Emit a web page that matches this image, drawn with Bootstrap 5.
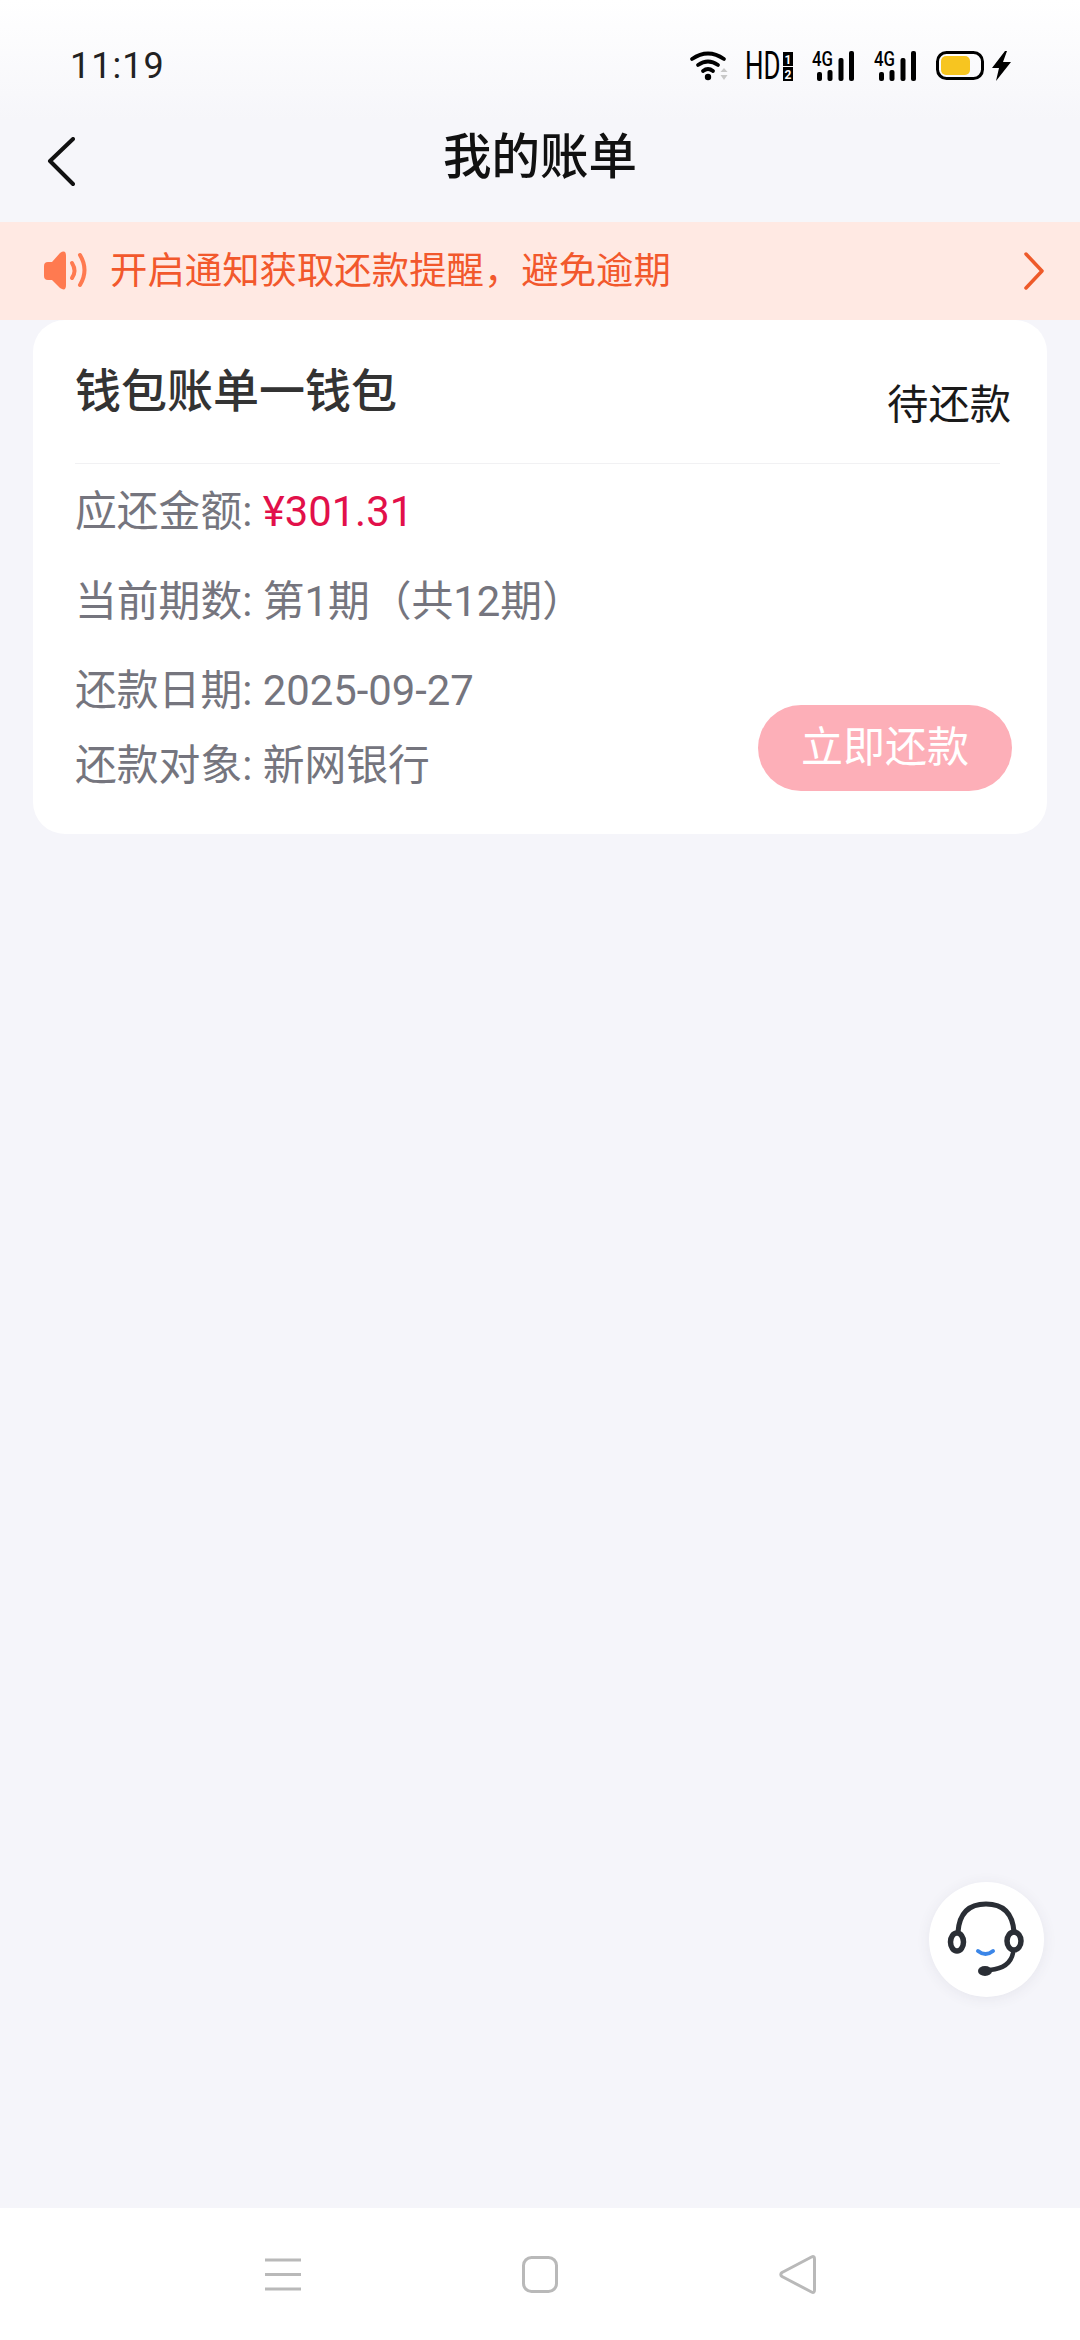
<!DOCTYPE html>
<html lang="zh-CN">
<head>
  <meta charset="UTF-8">
  <meta name="viewport" content="width=device-width, initial-scale=1.0">
  <title>我的账单</title>
  <link href="https://cdn.jsdelivr.net/npm/bootstrap@5.3.0/dist/css/bootstrap.min.css" rel="stylesheet">
  <style>
    html, body { margin: 0; }
    body {
      width: 1080px;
      height: 2340px;
      overflow: hidden;
      background: #f5f5fa;
      font-family: Roboto, "Noto Sans CJK SC", sans-serif;
    }
    .page-wrap { height: 2340px; }
    .top-area {
      height: 222px;
      background: linear-gradient(#fff 0, #f6f6fa 120px);
    }
    .status-bar { height: 102px; padding: 30px 69px 0 70px; }
    .status-time { font-size: 36px; color: #222; letter-spacing: 1px; line-height: 1; }
    .status-icons { gap: 18px; }
    .status-icons svg { overflow: visible; }
    .title-bar { height: 120px; }
    .back-link { left: 47px; top: 35px; }
    .page-title { font-size: 48.5px; font-weight: 500; color: #111; line-height: 1; padding-bottom: 7px; }
    .notice-bar {
      height: 98px;
      padding: 0 36px 0 44px;
      background: #ffe9e3;
      color: #f2582c;
      font-size: 37.4px;
    }
    .notice-text { margin-left: 21px; }
    .bill-card {
      margin: 0 33px;
      height: 514px;
      background: #fff;
      border-radius: 32px;
    }
    .bill-head { height: 143px; padding: 0 36px 0 42px; }
    .bill-name { font-size: 46px; font-weight: 500; color: #333; line-height: 60px; padding-top: 41px; }
    .bill-state { font-size: 41.3px; color: #1a1a1a; line-height: 60px; padding-top: 55px; }
    .bill-line { height: 1px; margin: 0 47px 0 42px; background: #f1f1f3; }
    .bill-body { padding: 18px 35px 0 42px; }
    .info-row { font-size: 41.8px; line-height: 60px; color: #75757e; }
    .gap-a { margin-top: 30px; }
    .gap-b { margin-top: 29px; }
    .gap-c { margin-top: 15px; }
    .amount-text { color: #e2104a; }
    .pay-btn {
      width: 254px;
      height: 86px;
      padding: 0;
      border: 0;
      border-radius: 43px;
      background: #fdafb8;
      color: #fff;
      font-size: 42px;
      line-height: 86px;
      margin-bottom: 5px;
    }
    .service-btn {
      left: 929px;
      top: 1882px;
      width: 115px;
      height: 115px;
      background: #fff;
      box-shadow: 0 2px 14px rgba(60, 60, 90, .08);
    }
    .bottom-nav { height: 132px; background: #fff; gap: 221px; }
  </style>
</head>
<body>
  <div class="page-wrap d-flex flex-column position-relative">
    <div class="top-area">
      <div class="status-bar d-flex justify-content-between align-items-center">
        <div class="status-time">11:19</div>
        <div class="status-icons d-flex align-items-center">
          <!-- wifi -->
          <svg width="37" height="30" viewBox="0 0 37 30">
            <g fill="none" stroke="#000" stroke-width="3.800" stroke-linecap="round">
              <path d="M2 8 Q18 -3 34 8"/>
              <path d="M8 14 Q18 7 28 14"/>
              <path d="M13 20 Q18 16 23 20"/>
            </g>
            <circle cx="18" cy="26" r="3.200" fill="#000"/>
            <path d="M30.500 21l3.500-4 3.500 4zM30.500 24l3.500 5 3.500-5z" fill="#c8c8c8"/>
          </svg>
          <!-- HD -->
          <svg width="48" height="30" viewBox="0 0 48 30">
            <text transform="scale(1 1.5)" x="0" y="18.700" font-family="Roboto, sans-serif" font-size="26" fill="#000">HD</text>
            <rect x="38" y="1" width="10" height="14" fill="#000"/>
            <rect x="38" y="16" width="10" height="14" fill="#000"/>
            <text x="43" y="12.500" text-anchor="middle" font-family="Roboto, sans-serif" font-weight="700" font-size="12" fill="#fff">1</text>
            <text x="43" y="27.500" text-anchor="middle" font-family="Roboto, sans-serif" font-weight="700" font-size="12" fill="#fff">2</text>
          </svg>
          <!-- sim 1 -->
          <svg width="44" height="30" viewBox="0 0 44 30">
            <text x="1" y="15" font-family="Roboto, sans-serif" font-weight="500" font-size="20" textLength="21" lengthAdjust="spacingAndGlyphs" fill="#000">4G</text>
            <rect x="6" y="21" width="5" height="9" rx="2" fill="#000"/>
            <rect x="16.500" y="19" width="5" height="11" rx="2" fill="#000"/>
            <rect x="27.500" y="7" width="5" height="23" rx="2" fill="#000"/>
            <rect x="38" y="0" width="5" height="30" rx="2" fill="#000"/>
          </svg>
          <!-- sim 2 -->
          <svg width="44" height="30" viewBox="0 0 44 30">
            <text x="1" y="15" font-family="Roboto, sans-serif" font-weight="500" font-size="20" textLength="21" lengthAdjust="spacingAndGlyphs" fill="#000">4G</text>
            <rect x="6" y="21" width="5" height="9" rx="2" fill="#000"/>
            <rect x="16.500" y="19" width="5" height="11" rx="2" fill="#000"/>
            <rect x="27.500" y="7" width="5" height="23" rx="2" fill="#000"/>
            <rect x="38" y="0" width="5" height="30" rx="2" fill="#000"/>
          </svg>
          <!-- battery -->
          <svg width="76" height="30" viewBox="0 0 76 30">
            <rect x="2.500" y="1.500" width="45" height="26" rx="9" fill="none" stroke="#000" stroke-width="3"/>
            <rect x="6" y="5" width="29" height="19" rx="5" fill="#f7c520"/>
            <path d="M70 0l-13 17h7l-3 13 15-19h-8l4-11z" fill="#000"/>
          </svg>
        </div>
      </div>
      <div class="title-bar position-relative d-flex align-items-center justify-content-center">
        <a href="#" class="back-link position-absolute d-block">
          <svg width="28" height="50" viewBox="0 0 28 50" class="d-block">
            <path d="M26 2 L3 24 L26 47" fill="none" stroke="#111" stroke-width="4" stroke-linecap="round" stroke-linejoin="round"/>
          </svg>
        </a>
        <div class="page-title">我的账单</div>
      </div>
    </div>

    <div class="notice-bar d-flex align-items-center">
      <svg width="45" height="40" viewBox="0 0 45 40" class="flex-shrink-0">
        <path d="M0 15Q0 11 4 11H8L16 2Q22 -2 22 5V34Q22 41 16 37L8 29H4Q0 29 0 25Z" fill="#ff7a50"/>
        <path d="M28 12q5 8 0 15" fill="none" stroke="#ff7a50" stroke-width="4" stroke-linecap="round"/>
        <path d="M36 4q9 15 0 30" fill="none" stroke="#ff7a50" stroke-width="4" stroke-linecap="round"/>
      </svg>
      <div class="notice-text flex-grow-1">开启通知获取还款提醒，避免逾期</div>
      <svg width="20" height="38" viewBox="0 0 20 38" class="flex-shrink-0">
        <path d="M2 2 L18 19 L2 36" fill="none" stroke="#ee5a2a" stroke-width="3.500" stroke-linecap="round" stroke-linejoin="round"/>
      </svg>
    </div>

    <div class="flex-grow-1">
      <div class="bill-card">
        <div class="bill-head d-flex justify-content-between align-items-start">
          <div class="bill-name">钱包账单一钱包</div>
          <div class="bill-state">待还款</div>
        </div>
        <div class="bill-line"></div>
        <div class="bill-body">
          <div class="info-row">应还金额: <span class="amount-text">¥301.31</span></div>
          <div class="info-row gap-a">当前期数: 第1期（共12期）</div>
          <div class="d-flex justify-content-between align-items-end gap-b">
            <div>
              <div class="info-row">还款日期: 2025-09-27</div>
              <div class="info-row gap-c">还款对象: 新网银行</div>
            </div>
            <button type="button" class="btn pay-btn">立即还款</button>
          </div>
        </div>
      </div>
    </div>

    <div class="bottom-nav d-flex align-items-center justify-content-center">
      <svg width="36" height="33" viewBox="0 0 36 33">
        <path d="M0 2h36M0 16.500h36M0 31h36" stroke="#b9b9b9" stroke-width="3"/>
      </svg>
      <svg width="36" height="37" viewBox="0 0 36 37">
        <rect x="1.500" y="1.500" width="33" height="34" rx="8" fill="none" stroke="#b9b9b9" stroke-width="3"/>
      </svg>
      <svg width="37" height="39" viewBox="0 0 37 39">
        <path d="M32.500 2Q35.500 0.500 35.500 4V35Q35.500 38.500 32.500 37L3 21.500Q0.500 19.500 3 17.500Z" fill="none" stroke="#b9b9b9" stroke-width="3" stroke-linejoin="round"/>
      </svg>
    </div>

    <div class="service-btn position-absolute rounded-circle">
      <svg width="115" height="115" viewBox="29 22 115 115" class="d-block">
        <g fill="none" stroke="#2a2e35" stroke-linecap="round">
          <path d="M58 72 Q60 44 86 44 Q112 44 114 72" stroke-width="5"/>
          <ellipse cx="57" cy="82" rx="6.500" ry="9" stroke-width="5.500"/>
          <ellipse cx="114" cy="81" rx="7" ry="9" stroke-width="5.500"/>
          <path d="M113 93 Q110 108 90 110" stroke-width="4.500"/>
        </g>
        <ellipse cx="85" cy="111" rx="7" ry="5" fill="#2a2e35"/>
        <path d="M78 91 Q85.500 97 93 91" fill="none" stroke="#3b86e8" stroke-width="4" stroke-linecap="round"/>
      </svg>
    </div>
  </div>
</body>
</html>
